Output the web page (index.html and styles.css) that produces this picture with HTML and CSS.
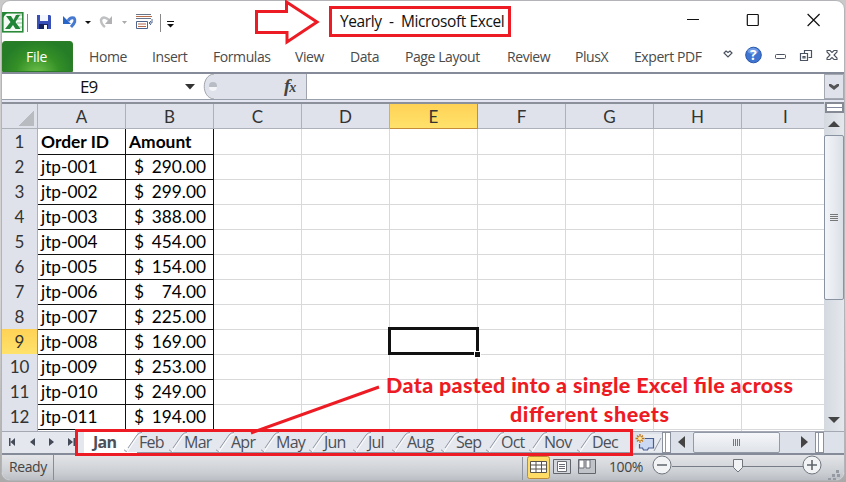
FILE: index.html
```html
<!DOCTYPE html>
<html lang="en">
<head>
<meta charset="utf-8">
<title>Yearly - Microsoft Excel</title>
<link rel="stylesheet" href="styles.css">
</head>
<body>
<svg width="0" height="0" class="defs"><defs>
  <symbol id="slash" viewBox="0 0 18 20"><path d="M0 20Q3 19 5 15L13 3Q15 0 18 0V20Z" fill="#e5e8ee"/><path d="M-1 17L3 20M4 16L13 3Q15 .5 18 .5" fill="none" stroke="#9299a6"/><path d="M3 20Q5 17 7 14L14 4Q16 2 18 2" fill="none" stroke="#fff"/></symbol>
</defs></svg>
<div class="window">
  <header class="titlebar">
    <svg class="quick" width="180" height="41" viewBox="0 0 180 41">
      <rect x=".8" y="12.8" width="20" height="19" fill="#f4faf4" stroke="#2a8a3a" stroke-width="1.600"/><path d="M1 18Q4 12 9 12H1Z" fill="#238536"/><path d="M15 15h5M15 19h5M15 23h5M15 27h5" stroke="#99bd9b"/><path d="M4 16h5l2.500 4L14 15h4l-4.500 7 5 7h-5l-2.500-4-3 4H3l5.500-7z" fill="#218537"/>
      <path d="M25.500 14v18M158.500 14v18" stroke="#888"/>
      <path d="M35 15h13l1 1v13H35z" fill="#3950b9"/><path d="M38 15h8v6h-8z" fill="#f5f7ff"/><path d="M37 24h9v5h-9z" fill="#18245d"/><path d="M42 25h3v4h-3z" fill="#fff"/>
      <path d="M66 21Q68 17 72 18Q75 21 69 27" fill="none" stroke="#4779d0" stroke-width="3"/><path d="M61 16v8h8z" fill="#2865c8"/>
      <path d="M83 21h6l-3 3z" fill="#111"/><path d="M120 21h5l-2.500 3z" fill="#aaa"/>
      <path d="M107 20Q101 15 99 20Q99 24 103 27" fill="none" stroke="#bfc0c2" stroke-width="2.500"/><path d="M110 16v8h-7z" fill="#b2b2b4"/>
      <path d="M134 14.500h15M134 18.500h15" stroke="#68758b"/><path d="M134 16.500h16" stroke="#b96e4b"/><path d="M134.500 21.500h11v7h-11z" fill="#fff" stroke="#4d658c"/><path d="M136 24h8M136 26.500h8" stroke="#b36b4c"/><path d="M150 19v4h-3m2-2-2 2 2 2" fill="none" stroke="#526b93"/>
      <path d="M165 21.500h7" stroke="#111"/><path d="M165 24h7l-3.500 3.500z" fill="#111"/>
    </svg>
    <h1 class="title">Yearly&nbsp; -&nbsp; Microsoft Excel</h1>
    <svg class="controls" width="160" height="41" viewBox="0 0 160 41" fill="none" stroke="#111" stroke-width="1.200"><path d="M2 18.500h12"/><rect x="62.500" y="13.500" width="11" height="11" rx=".7"/><path d="m123 13 12 12m0-12-12 12"/></svg>
  </header>
  <nav class="ribbon">
    <span class="file">File</span>
    <div class="menus"><span>Home</span><span>Insert</span><span>Formulas</span><span>View</span><span>Data</span><span>Page Layout</span><span>Review</span><span>PlusX</span><span>Expert PDF</span></div>
    <svg class="tools" width="121" height="30" viewBox="0 0 121 30"><path d="m1 9 2 1.500L5 9l2 2-4 4-4-4z" transform="translate(2 0)" fill="#fff" stroke="#4b5260" stroke-width="1.200"/><circle cx="30.500" cy="13" r="7.800" fill="#3f74d0" stroke="#2859ad"/><ellipse cx="30" cy="9" rx="5.500" ry="3" fill="#719ce5"/><text x="27" y="18" class="help">?</text><rect x="52.500" y="12.500" width="10" height="4" rx="1" fill="#fff" stroke="#4b5260"/><path d="M81.500 11.500v-3h7v7h-3M77.500 11.500h7v7h-7zM80 14.500h2v1.500h-2z" fill="none" stroke="#4b5260" stroke-width="1.200"/><path d="M104 8.500h3l2 2 2-2h3v1.500l-3 3 3 3v1.500h-3l-2-2-2 2h-3V16l3-3-3-3z" fill="#fff" stroke="#4b5260" stroke-width="1.100"/></svg>
  </nav>
  <div class="formula">
    <div class="namebox"><span>E9</span><svg width="10" height="6" viewBox="0 0 10 6"><path d="M0 0h10L5 5.500z" fill="#333"/></svg></div>
    <div class="fxarea"><svg width="105" height="25" viewBox="0 0 105 25"><path d="M0 0h12C-1 1-1 24 12 25H0z" fill="#fff"/><path d="M12 0C-1 1-1 24 12 25" fill="none" stroke="#a0a5ad"/><circle cx="11" cy="12" r="4" fill="#b8bdc5"/><path d="M7 13a4 4 0 0 0 8 0z" fill="#f3f5f8"/></svg><span class="fx">f<small>x</small></span></div>
    <div class="formula-input"></div>
    <div class="expand"><svg width="10" height="7" viewBox="0 0 10 7"><path d="M0 1h2l3 2 3-2h2v2L5 7 0 3z" fill="#555"/></svg></div>
  </div>
  <main class="workspace">
    <div class="sheet">
      <div class="row heads"><b class="corner"></b><b>A</b><b>B</b><b>C</b><b>D</b><b class="active">E</b><b>F</b><b>G</b><b>H</b><b>I</b></div>
      <div class="row"><b>1</b><i class="data bold">Order ID</i><i class="data bold">Amount</i><i></i><i></i><i></i><i></i><i></i><i></i><i></i></div>
      <div class="row"><b>2</b><i class="data">jtp-001</i><i class="data money"><span>$</span><span>290.00</span></i><i></i><i></i><i></i><i></i><i></i><i></i><i></i></div>
      <div class="row"><b>3</b><i class="data">jtp-002</i><i class="data money"><span>$</span><span>299.00</span></i><i></i><i></i><i></i><i></i><i></i><i></i><i></i></div>
      <div class="row"><b>4</b><i class="data">jtp-003</i><i class="data money"><span>$</span><span>388.00</span></i><i></i><i></i><i></i><i></i><i></i><i></i><i></i></div>
      <div class="row"><b>5</b><i class="data">jtp-004</i><i class="data money"><span>$</span><span>454.00</span></i><i></i><i></i><i></i><i></i><i></i><i></i><i></i></div>
      <div class="row"><b>6</b><i class="data">jtp-005</i><i class="data money"><span>$</span><span>154.00</span></i><i></i><i></i><i></i><i></i><i></i><i></i><i></i></div>
      <div class="row"><b>7</b><i class="data">jtp-006</i><i class="data money"><span>$</span><span>74.00</span></i><i></i><i></i><i></i><i></i><i></i><i></i><i></i></div>
      <div class="row"><b>8</b><i class="data">jtp-007</i><i class="data money"><span>$</span><span>225.00</span></i><i></i><i></i><i></i><i></i><i></i><i></i><i></i></div>
      <div class="row"><b class="active">9</b><i class="data">jtp-008</i><i class="data money"><span>$</span><span>169.00</span></i><i></i><i></i><i class="selected"></i><i></i><i></i><i></i><i></i></div>
      <div class="row"><b>10</b><i class="data">jtp-009</i><i class="data money"><span>$</span><span>253.00</span></i><i></i><i></i><i></i><i></i><i></i><i></i><i></i></div>
      <div class="row"><b>11</b><i class="data">jtp-010</i><i class="data money"><span>$</span><span>249.00</span></i><i></i><i></i><i></i><i></i><i></i><i></i><i></i></div>
      <div class="row"><b>12</b><i class="data">jtp-011</i><i class="data money"><span>$</span><span>194.00</span></i><i></i><i></i><i></i><i></i><i></i><i></i><i></i></div>
      <div class="row"><b></b><i></i><i></i><i></i><i></i><i></i><i></i><i></i><i></i><i></i></div>
    </div>
    <div class="vscroll"><div class="split"></div><svg class="up" width="20" height="22" viewBox="0 0 20 22"><path d="m10 8 6 6H4z" fill="#444"/></svg><div class="vthumb"><span></span></div><svg class="down" width="20" height="22" viewBox="0 0 20 22"><path d="M4 8h12l-6 6z" fill="#444"/></svg></div>
  </main>
  <div class="bottom">
    <svg class="arrows" width="82" height="21" viewBox="0 0 82 21" fill="#444a57"><path d="M7 6h1.500v8H7zM13 6v8l-4.500-4zM33 6v8l-5-4zM47 6v8l5-4zM66 6v8l5-4zM71.500 6H73v8h-1.500z"/></svg>
    <div class="tabs"><span class="jan">Jan</span><span><svg><use href="#slash"/></svg>Feb</span><span><svg><use href="#slash"/></svg>Mar</span><span><svg><use href="#slash"/></svg>Apr</span><span><svg><use href="#slash"/></svg>May</span><span><svg><use href="#slash"/></svg>Jun</span><span><svg><use href="#slash"/></svg>Jul</span><span><svg><use href="#slash"/></svg>Aug</span><span><svg><use href="#slash"/></svg>Sep</span><span><svg><use href="#slash"/></svg>Oct</span><span><svg><use href="#slash"/></svg>Nov</span><span><svg><use href="#slash"/></svg>Dec</span></div>
    <svg class="newsheet" width="31" height="21" viewBox="0 0 31 21"><path d="M0 20q3-1 4-4L12 2h19v18z" fill="#e8ebf0"/><path d="M23 19 30 6" stroke="#9299a6"/><path d="M8.500 12v4h3l1 2h4l1-2h5V6.500H14" fill="#cbd9f3" stroke="#485e91" stroke-width="1.200"/><path d="M9 2v9M4.500 6.500h9M6 3.500l6 6m0-6-6 6" stroke="#bc781c" stroke-width="1.300"/><circle cx="9" cy="6.500" r="2" fill="#ffe399"/></svg>
    <div class="splitter"></div>
    <svg class="harrow" width="22" height="21" viewBox="0 0 22 21"><path d="M14 4v12l-7-6z" fill="#444"/></svg>
    <div class="hthumb"><span></span></div>
    <svg class="harrow right" width="35" height="21" viewBox="0 0 35 21"><path d="M21 4v12l7-6z" fill="#444"/></svg>
    <div class="splitter"></div>
  </div>
  <footer class="status"><span class="ready">Ready</span>
    <svg class="views" width="77" height="27" viewBox="0 0 77 27"><path d="M.5 2v23" stroke="#8e949d"/><rect x="5.500" y="1.500" width="22" height="22" rx="2" fill="#ffdc65" stroke="#bd8b35"/><path d="M8.500 6.500h16v11h-16zM8.500 10h16M8.500 14h16M14 6.500v11M19.500 6.500v11" fill="#fff" stroke="#59534a"/><path d="M31.500 4.500h17v14h-17z" fill="#d3d6da" stroke="#62666c"/><path d="M35.500 6.500h9v10h-9zM37 9.500h6M37 11.500h6M37 13.500h6" fill="#fff" stroke="#6a6e74"/><path d="M56.500 4.500h17v14h-17z" fill="#c0c3c8" stroke="#62666c"/><path d="M57 5h5v8h-5zM64 5h4v8h-4z" fill="#fff" stroke="#6a6e74"/></svg>
    <span class="percent">100%</span>
    <svg class="zoom" width="192" height="27" viewBox="0 0 192 27"><path d="M20 11.500h132" stroke="#777d87"/><g fill="#f2f3f5" stroke="#71767e"><circle cx="10" cy="10" r="9"/><circle cx="160" cy="10" r="9"/><path d="M81.500 4.500h9v8L86 17l-4.500-4.500z"/></g><path d="M5 10h10M155 10h10M160 5v10" stroke="#60656d" stroke-width="1.600"/><g fill="#969ba3"><path d="M184 15h3v3h-3zM180 19h3v3h-3zM185 19h3v3h-3zM176 23h3v2h-3zM181 23h3v2h-3z"/></g></svg>
  </footer>
</div>
<svg class="annotations" width="846" height="482" viewBox="0 0 846 482"><g fill="none" stroke="#ed1c24" stroke-width="3"><path d="M256.500 11.500h30V2L317 22 287 42V32.500h-30.500z"/><path d="M330.500 7.500h179v28h-179zM76.500 430.500h555v24h-555zM251 433 379 387"/></g><text x="386" y="393" textLength="407">Data pasted into a single Excel file across</text><text x="510" y="422" textLength="159">different sheets</text></svg>
</body>
</html>
```
FILE: styles.css
```css
*, *::before, *::after { box-sizing: border-box; }
body { margin: 0; width: 846px; height: 482px; overflow: hidden; background: linear-gradient(#c9c9c9, #d7d7d8 60%, #aaa); font-family: "Open Sans", "Noto Sans", sans-serif; }
.defs { position: absolute; }
.window { width: 844px; height: 481px; margin: 0 0 0 1px; border: 1px solid #b2b4b7; border-radius: 9px; overflow: hidden; background: #fff; display: flex; flex-direction: column; }
.titlebar { height: 40px; display: flex; flex: none; }
.quick { margin-top: -1px; flex: none; }
.title { width: 165px; margin: 9px 0 0 158px; font: 15.500px/22px "Open Sans", sans-serif; letter-spacing: -.38px; white-space: nowrap; color: #111; }
.controls { margin-left: 180px; }
.ribbon { height: 33px; display: flex; flex: none; border-bottom: 2px solid #858b99; }
.file { width: 72px; height: 31px; padding-top: 6px; border: 1px solid #2d7d27; border-radius: 3px 3px 0 0; text-align: center; font-size: 14px; letter-spacing: -.3px; line-height: 18px; color: #fff; background: radial-gradient(ellipse at 50% 110%, #6fc04b, #349026 45%, #267d28 75%); padding-right: 2px; }
.menus { width: 633px; padding-left: 16px; display: grid; grid-template-columns: 63px 61px 82px 55px 55px 102px 68px 59px 72px; font-size: 14px; line-height: 32px; color: #4a4a4a; white-space: nowrap; letter-spacing: -.42px; }
.tools { margin: 1px 0 0 17px; flex: none; overflow: visible; }
.help { font: bold 14px "Open Sans", sans-serif; fill: #fff; }
.formula { height: 26px; display: flex; flex: none; border-bottom: 1px solid #9a9fac; }
.namebox { width: 200px; display: flex; align-items: center; padding-left: 78px; font-size: 17px; line-height: 24px; color: #111; }
.namebox span { width: 105px; letter-spacing: -1px; }
.fxarea { width: 105px; background: #dfe2ea; border-right: 1px solid #a0a5ad; display: flex; }
.fxarea > svg { flex: none; }
.fx { margin-left: -23px; font: italic bold 19px/23px "Liberation Serif", serif; color: #444; }
.fx small { font-size: 14px; margin-left: -1px; }
.formula-input { flex: 1; }
.expand { width: 20px; border: 1px solid #a4a9b2; background: #dfe2ea; display: grid; place-items: center; }
.workspace { height: 331px; flex: none; display: flex; padding-top: 2px; background: #e4e6f1; }
.sheet { width: 822px; height: 329px; border-top: 2px solid #8b909b; overflow: hidden; background: #fff; font-family: Lato, sans-serif; }
.row { height: 25px; width: 828px; display: grid; grid-template-columns: 36px repeat(9, 88px); }
.row > * { border-right: 1px solid #d8d9db; border-bottom: 1px solid #d8d9db; }
.row > b { display: flex; align-items: center; justify-content: center; background: #dfe2ea; border-color: #adb1b8; font-weight: 400; font-size: 17px; color: #333; }
.row i { position: relative; font-style: normal; }
.data { padding: 0 7px 0 3px; border-color: #111 !important; font-size: 17.300px; line-height: 25px; color: #000; white-space: nowrap; }
.data.bold { font-weight: 700; font-size: 17.400px; }
.data.money { display: flex; justify-content: space-between; padding-left: 8px; }
.row .active { background: linear-gradient(#ffd256, #ffe26b); border-color: #c68d38; }
.corner { background: linear-gradient(135deg, transparent 50%, #b8bbc0 50%) 17px 7px / 15px 15px no-repeat #dfe2ea !important; }
.selected::before { content: ""; position: absolute; left: -2px; top: -2px; width: 91px; height: 28px; border: 3px solid #111; z-index: 1; }
.selected::after { content: ""; position: absolute; right: -4px; bottom: -4px; width: 7px; height: 7px; border: 1px solid #fff; background: #111; z-index: 2; }
.vscroll { width: 20px; display: flex; flex-direction: column; background: linear-gradient(90deg, #d4d9e0, #e4e8ed); }
.split { height: 11px; margin: 0 0 0 1px; border: 2px solid #858a94; background: linear-gradient(#fff 3px, #8188a0 3px 4px, #fff 4px); }
.up, .down { flex: none; }
.vthumb { height: 165px; border: 1px solid #8993a1; border-radius: 2px; background: linear-gradient(90deg, #f2f5f9, #e6eaf0 55%, #d9dfe6); display: grid; place-items: center; }
.vthumb span { width: 8px; height: 7px; background: repeating-linear-gradient(#777 0 1px, transparent 1px 2px); }
.down { margin-top: auto; }
.bottom { height: 22px; flex: none; display: flex; background: #dde1e9; border-top: 1px solid #a3a8b2; }
.arrows { flex: none; background: #e4e7ed; }
.tabs { width: 547px; display: grid; grid-template-columns: 55px 45px 47px 45px 48px 44px 39px 49px 45px 43px 48px 39px; background: #e4e7ed; border-bottom: 1px solid #9299a6; color: #4c5058; font: 16px/21px "Open Sans", sans-serif; letter-spacing: -.75px; isolation: isolate; }
.tabs > span { position: relative; white-space: nowrap; }
.tabs svg { position: absolute; left: -15px; top: 0; width: 18px; height: 20px; z-index: -1; }
.tabs .jan { padding-left: 9px; font-weight: 700; background: #fff; width: 53px; z-index: -1; }
.newsheet { flex: none; }
.splitter { width: 9px; flex: none; border: 1px solid #8b919c; background: linear-gradient(90deg, #fff 2px, #9298a4 2px 3px, #fff 3px); }
.harrow { flex: none; }
.hthumb { width: 87px; flex: none; border: 1px solid #929aa7; border-radius: 2px; background: linear-gradient(#f5f6f9, #dfe3e9); display: grid; place-items: center; }
.hthumb span { width: 7px; height: 7px; background: repeating-linear-gradient(90deg, #777 0 1px, transparent 1px 2px); }
.status { height: 27px; flex: none; display: flex; border-top: 2px solid #858b99; background: linear-gradient(#e3e5e8, #cbced3 70%, #bbbfc5); color: #444; font: 14px/23px "Open Sans", sans-serif; letter-spacing: -.4px; }
.ready { width: 54px; height: 25px; padding-left: 7px; border-right: 1px solid #878d96; }
.views { margin-left: 468px; flex: none; }
.percent { width: 53px; padding-left: 10px; flex: none; }
.zoom { flex: none; }
.annotations { position: absolute; left: 0; top: 0; pointer-events: none; z-index: 10; }
.annotations text { font: 900 21.500px Lato, sans-serif; fill: #ed1c24; }
```
